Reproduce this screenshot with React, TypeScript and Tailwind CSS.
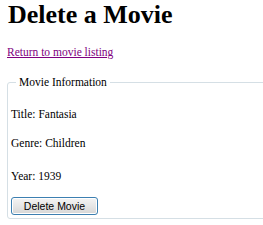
export default function App() {
  return (
    <div className="w-[263px] h-[225px] overflow-hidden bg-white text-black font-['Liberation_Serif','Times_New_Roman',serif]">
      <h1 className="pl-[8px] text-[26px] leading-[30px] font-bold">Delete a Movie</h1>
      <p className="mt-[15px] pl-[7px] text-[11.5px] leading-[14px]">
        <a href="#" className="text-[#800080] underline">Return to movie listing</a>
      </p>
      <fieldset className="mt-[16px] ml-[7px] w-[270px] border border-[#d5dfe5] rounded-[3px] pl-[3px] pb-[3px]">
        <legend className="ml-[5px] px-[3px] text-[11.5px] leading-[15px]">Movie Information</legend>
        <div className="flex flex-col text-[11.5px] leading-[14px]">
          <p className="mt-[17px]">Title: Fantasia</p>
          <p className="mt-[15px]">Genre: Children</p>
          <p className="mt-[19px]">Year: 1939</p>
          <div className="mt-[14px]">
            <button className="w-[87px] h-[18px] rounded-[3px] border border-[#3c7fb1] bg-gradient-to-b from-[#f4f4f4] via-[#e6e6e6] to-[#d6d6d6] shadow-[inset_0_0_0_1px_#ffffff] font-['Liberation_Sans',Arial,sans-serif] text-[10.5px] leading-[16px] text-black">
              Delete Movie
            </button>
          </div>
        </div>
      </fieldset>
    </div>
  );
}
